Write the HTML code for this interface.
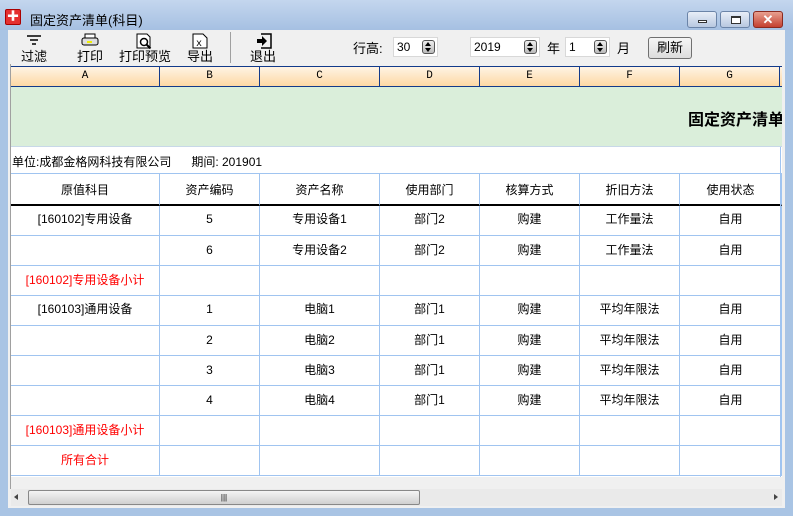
<!DOCTYPE html>
<html><head><meta charset="utf-8">
<style>
*{margin:0;padding:0;box-sizing:border-box}
body{width:793px;height:516px;overflow:hidden;position:relative;background:#a9c4e4;font-family:"Liberation Sans","Noto Sans CJK SC",sans-serif;font-size:12px;color:#000}
.abs{position:absolute}
#title{left:0;top:0;width:793px;height:30px;background:linear-gradient(#c4d6ee,#a6c0e2)}
#client{left:8px;top:30px;width:777px;height:478px;background:#f0f0f0}
.tb{position:absolute;top:31px;height:34px;text-align:center;font-size:13px}
.tb span{position:absolute;bottom:0px;left:0;right:0;white-space:nowrap}
.spin{position:absolute;background:#fff;border:1px solid #d8d8d8;height:20px;font-size:12px;padding:2px 0 0 3px}
.sb{position:absolute;right:2px;top:2px;width:13px;height:14px;border:1px solid #555;border-radius:3px;background:linear-gradient(#eee,#bbb)}
.sb:before{content:"";position:absolute;left:2px;top:1px;border:3.5px solid transparent;border-bottom:4px solid #000;border-top:0}
.sb:after{content:"";position:absolute;left:2px;bottom:1px;border:3.5px solid transparent;border-top:4px solid #000;border-bottom:0}
#colhdr{left:11px;top:66px;width:771px;height:21px;background:linear-gradient(#fff4e4,#fdd8a4);border-top:1px solid #123a8a;border-bottom:1px solid #123a8a}
.ch{position:absolute;top:0;height:19px;border-right:1px solid #123a8a;text-align:center;font-family:"Liberation Mono",monospace;font-size:11px;line-height:19px}
#sheet{left:11px;top:87px;width:771px;height:390px;background:#fff;overflow:hidden}
.c{position:absolute;border-right:1px solid #a0c4f0;border-bottom:1px solid #a0c4f0;text-align:center;font-size:12px}
.red{color:#f00}
</style></head><body>
<div class="abs" id="title"></div>
<div class="abs" style="left:5px;top:9px;width:16px;height:16px;background:#e53030;border:1px solid #a00;border-radius:2px;color:#fff;font-size:12px;line-height:13px;text-align:center">✚</div>
<div class="abs" style="left:30px;top:10px;font-size:13px">固定资产清单(科目)</div>
<div class="abs" style="left:687px;top:11px;width:30px;height:17px;border:1px solid #6b84a8;border-radius:3px;background:linear-gradient(#e8eef8,#b8c8e0)"><div style="position:absolute;left:10px;top:8px;width:9px;height:3px;border:1px solid #333;background:#fff"></div></div>
<div class="abs" style="left:720px;top:11px;width:30px;height:17px;border:1px solid #6b84a8;border-radius:3px;background:linear-gradient(#e8eef8,#b8c8e0)"><div style="position:absolute;left:10px;top:4px;width:10px;height:8px;border:1px solid #333;border-top-width:2px;background:#fff"></div></div>
<div class="abs" style="left:753px;top:11px;width:30px;height:17px;border:1px solid #8a2a20;border-radius:3px;background:linear-gradient(#e8a090,#c44030);color:#fff;font-weight:bold;text-align:center;line-height:15px;font-size:13px">✕</div>
<div class="abs" id="client"></div>
<div class="tb" style="left:16px;width:36px"><svg width="18" height="14" style="position:absolute;left:9px;top:3px"><path d="M2 2h14M5 6h8M7 10h4" stroke="#000" stroke-width="1.5"/></svg><span>过滤</span></div>
<div class="tb" style="left:72px;width:36px"><svg width="18" height="16" style="position:absolute;left:9px;top:2px"><rect x="4" y="1" width="10" height="5" fill="#fff" stroke="#000"/><rect x="1" y="5" width="16" height="7" rx="2" fill="#ddd" stroke="#000"/><rect x="6" y="8" width="5" height="2" fill="#ee0"/></svg><span>打印</span></div>
<div class="tb" style="left:119px;width:52px"><svg width="18" height="16" style="position:absolute;left:17px;top:2px"><path d="M1 1h10l3 3v11H1z" fill="#fff" stroke="#000"/><circle cx="8" cy="9" r="3.5" fill="none" stroke="#000" stroke-width="1.5"/><path d="M10.5 11.5l4 4" stroke="#000" stroke-width="2"/></svg><span>打印预览</span></div>
<div class="tb" style="left:183px;width:34px"><svg width="16" height="16" style="position:absolute;left:9px;top:2px"><path d="M1 1h10l4 4v10H1z" fill="#fff" stroke="#000"/><text x="4" y="13" font-size="10" font-family="Liberation Mono">x</text></svg><span>导出</span></div>
<div class="abs" style="left:230px;top:32px;width:1px;height:31px;background:#a0a0a0"></div>
<div class="tb" style="left:246px;width:34px"><svg width="16" height="16" style="position:absolute;left:10px;top:2px"><path d="M5 1h10v14H5" fill="none" stroke="#000" stroke-width="1.5"/><path d="M1 6h5V3l5 5-5 5v-3H1z" fill="#000"/></svg><span>退出</span></div>
<div class="abs" style="left:353px;top:38px;font-size:13px">行高:</div>
<div class="spin" style="left:393px;top:37px;width:45px">30<div class="sb"></div></div>
<div class="spin" style="left:470px;top:37px;width:70px">2019<div class="sb"></div></div>
<div class="abs" style="left:547px;top:38px;font-size:13px">年</div>
<div class="spin" style="left:565px;top:37px;width:45px">1<div class="sb"></div></div>
<div class="abs" style="left:617px;top:38px;font-size:13px">月</div>
<div class="abs" style="left:648px;top:37px;width:44px;height:22px;border:1px solid #707070;border-radius:3px;background:linear-gradient(#f6f6f6,#dcdcdc);text-align:center;line-height:20px;font-size:13px">刷新</div>
<div class="abs" style="left:10px;top:64px;width:1px;height:425px;background:#a0a0a0"></div>
<div class="abs" id="colhdr">
<div class="ch" style="left:0;width:149px">A</div><div class="ch" style="left:149px;width:100px">B</div><div class="ch" style="left:249px;width:120px">C</div><div class="ch" style="left:369px;width:100px">D</div><div class="ch" style="left:469px;width:100px">E</div><div class="ch" style="left:569px;width:100px">F</div><div class="ch" style="left:669px;width:100px">G</div>
</div>
<div class="abs" id="sheet">
<div class="abs" style="left:0;top:0;width:771px;height:60px;background:#daeeda;border-bottom:1px solid #c8d8e8"></div>
<div class="abs" style="left:677px;top:19px;font-size:16px;font-weight:bold;white-space:nowrap">固定资产清单</div>
<div class="abs" style="left:1px;top:66px;font-size:12px">单位:成都金格网科技有限公司&nbsp;&nbsp;&nbsp;&nbsp;&nbsp;&nbsp;期间: 201901</div>
<div id="grid"></div>
</div>
<div class="abs" style="left:11px;top:477px;width:771px;height:12px;background:#f0f0f0"></div>
<div class="abs" style="left:11px;top:489px;width:771px;height:17px;background:#eaeaea"></div>
<div class="abs" style="left:14px;top:494px;border:3px solid transparent;border-right:4px solid #444;border-left:0"></div>
<div class="abs" style="left:774px;top:494px;border:3px solid transparent;border-left:4px solid #444;border-right:0"></div>
<div class="abs" style="left:28px;top:490px;width:392px;height:15px;border:1px solid #888;border-radius:2px;background:linear-gradient(#f4f4f4,#d0d0d0);text-align:center;font-size:8px;line-height:13px">|||</div>
<script>
(function(){
var cols=[0,149,249,369,469,569,669,769];
var rows=[
["原值科目","资产编码","资产名称","使用部门","核算方式","折旧方法","使用状态"],
["[160102]专用设备","5","专用设备1","部门2","购建","工作量法","自用"],
["","6","专用设备2","部门2","购建","工作量法","自用"],
["R[160102]专用设备小计","","","","","",""],
["[160103]通用设备","1","电脑1","部门1","购建","平均年限法","自用"],
["","2","电脑2","部门1","购建","平均年限法","自用"],
["","3","电脑3","部门1","购建","平均年限法","自用"],
["","4","电脑4","部门1","购建","平均年限法","自用"],
["R[160103]通用设备小计","","","","","",""],
["R所有合计","","","","","",""]];
var h='';
for(var r=0;r<rows.length;r++){
 var ty=r==0?86:119+(r-1)*30, ht=r==0?33:30;
 for(var c=0;c<7;c++){
  var t=rows[r][c],cls='c';
  if(t.charAt(0)=='R'){t=t.slice(1);cls+=' red';}
  var st='left:'+cols[c]+'px;top:'+ty+'px;width:'+(cols[c+1]-cols[c]+(c==6?2:0))+'px;height:'+ht+'px;line-height:'+(ht-1)+'px;';
  if(r==0)st+='border-bottom:2px solid #000;border-top:1px solid #a0c4f0;';
  if(r==1||r==4)st+='line-height:26px;';
  h+='<div class="'+cls+'" style="'+st+'">'+t+'</div>';
 }
}
h+='<div class="abs" style="left:769px;top:60px;width:1px;height:330px;background:#a0c4f0"></div>';
document.getElementById('grid').innerHTML=h;
})();
</script>
</body></html>
